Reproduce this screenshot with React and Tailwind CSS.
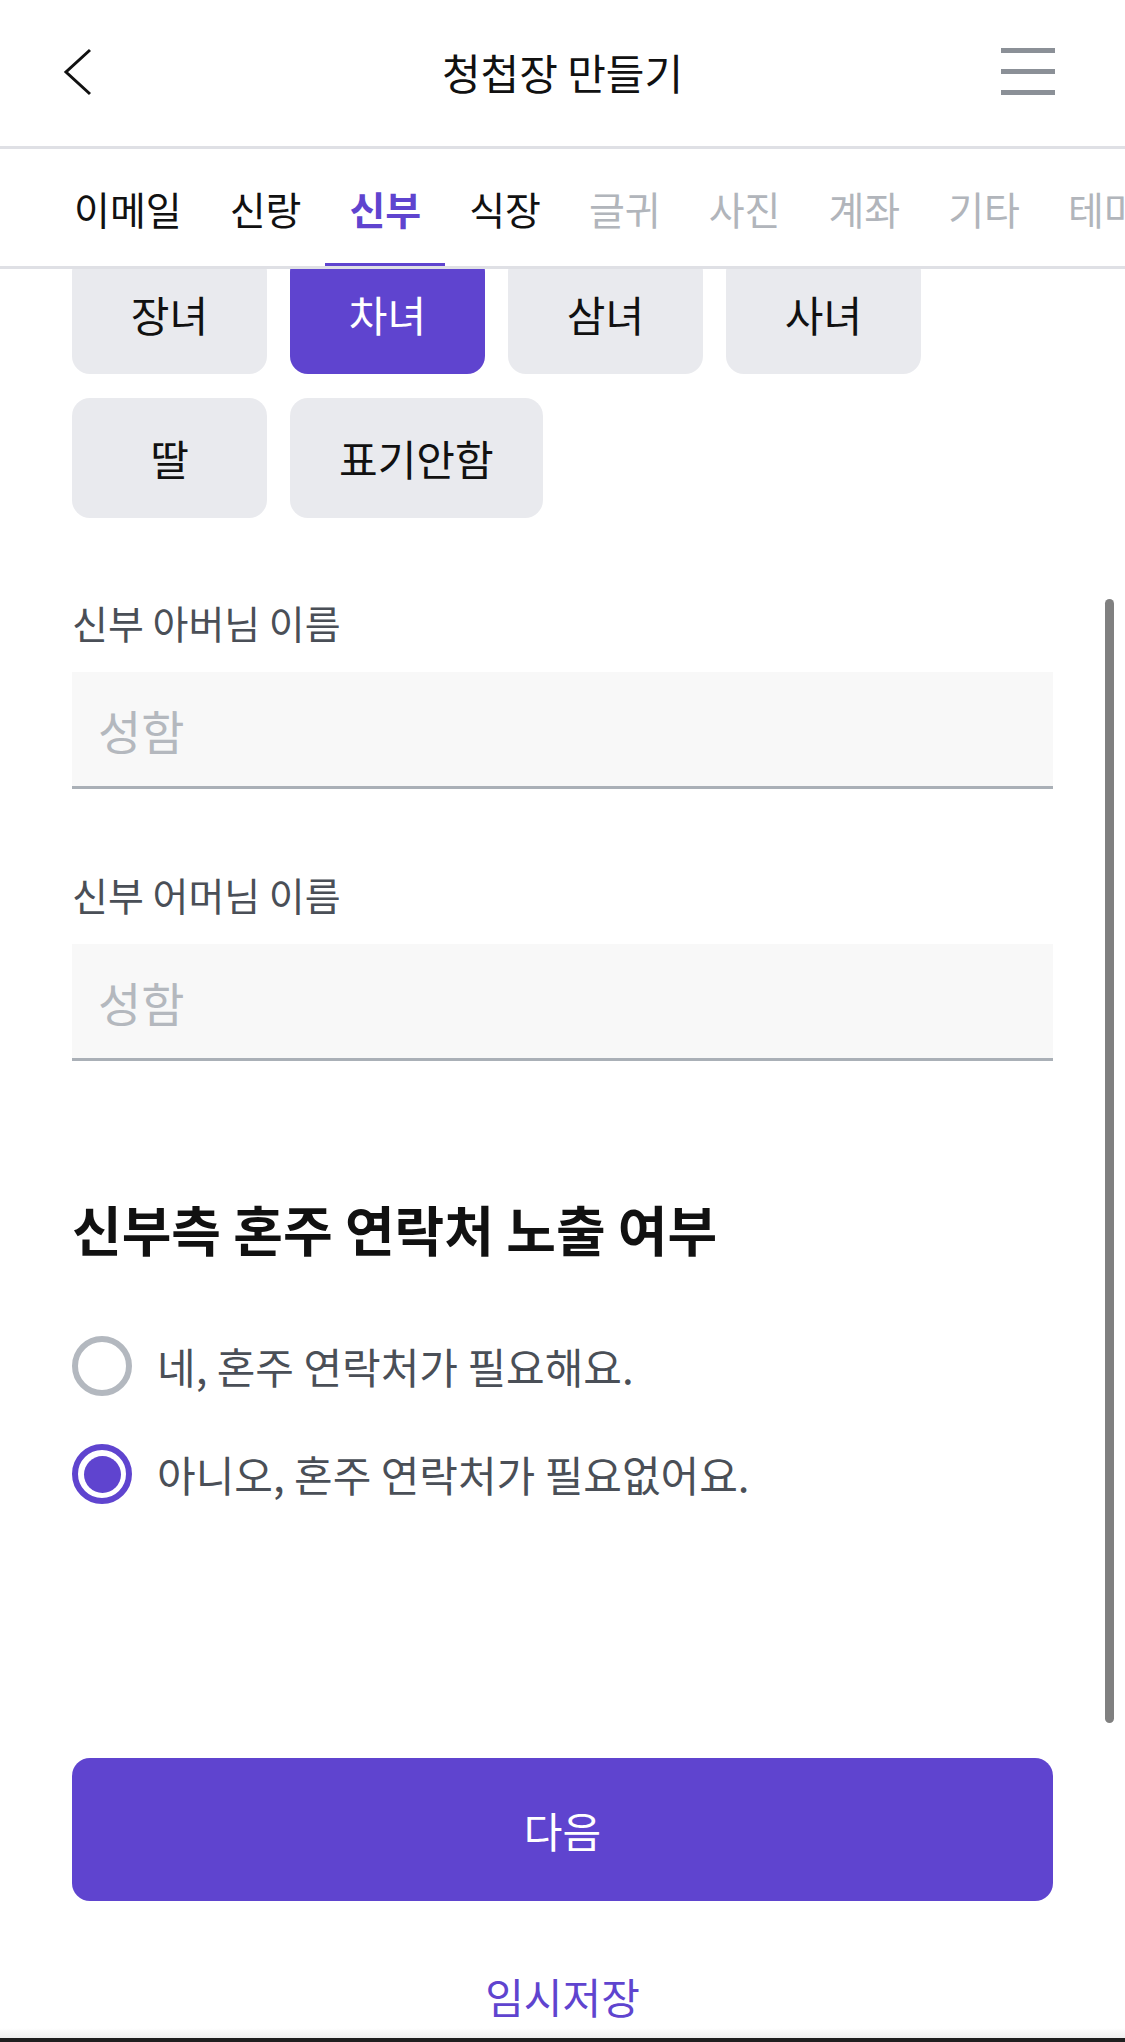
import React, { useState } from 'react'

const tabs = [
  { label: '이메일', state: 'done' },
  { label: '신랑', state: 'done' },
  { label: '신부', state: 'active' },
  { label: '식장', state: 'done' },
  { label: '글귀', state: 'off' },
  { label: '사진', state: 'off' },
  { label: '계좌', state: 'off' },
  { label: '기타', state: 'off' },
  { label: '테마', state: 'off' },
]

const orders = ['장녀', '차녀', '삼녀', '사녀', '딸', '표기안함']

function Radio({ checked, label, onClick }) {
  return (
    <button onClick={onClick} className="flex items-center gap-[25px] h-[60px] text-left">
      {checked ? (
        <span className="w-[60px] h-[60px] rounded-full border-[6px] border-[#5f44cf] flex items-center justify-center">
          <span className="w-[37px] h-[37px] rounded-full bg-[#5f44cf]"></span>
        </span>
      ) : (
        <span className="w-[60px] h-[60px] rounded-full border-[6px] border-[#b3b8bf]"></span>
      )}
      <span className="text-[42px] leading-[56px] text-[#4a4f57]">{label}</span>
    </button>
  )
}

function Field({ label }) {
  return (
    <div>
      <div className="text-[39px] leading-[48px] text-[#4a4f57]">{label}</div>
      <input
        placeholder="성함"
        className="mt-[26px] w-full h-[117px] bg-[#f8f8f8] border-b-[3px] border-[#aab0b7] px-[26px] text-[47px] text-[#111] placeholder:text-[#b4b8be] outline-none"
      />
    </div>
  )
}

export default function App() {
  const [order, setOrder] = useState('차녀')
  const [contact, setContact] = useState(false)

  return (
    <div
      className="w-[1125px] h-[2042px] bg-white flex flex-col overflow-hidden"
      style={{ fontFamily: '"Noto Sans CJK KR", "Noto Sans", sans-serif' }}
    >
      {/* header */}
      <header className="h-[149px] shrink-0 border-b-[3px] border-[#dfe0e5] flex items-center justify-between px-[60px] pr-[70px] relative">
        <svg width="34" height="48" viewBox="0 0 34 48" className="-mt-[3px]">
          <polyline points="30,2 6,24 30,46" fill="none" stroke="#111" strokeWidth="3" />
        </svg>
        <h1 className="absolute left-0 right-0 text-center text-[42px] leading-[56px] text-[#111] -mt-[3px] pointer-events-none">
          청첩장 만들기
        </h1>
        <div className="flex flex-col gap-[16px] w-[54px] -mt-[3px]">
          <span className="h-[5px] bg-[#8b9097]"></span>
          <span className="h-[5px] bg-[#8b9097]"></span>
          <span className="h-[5px] bg-[#8b9097]"></span>
        </div>
      </header>

      <nav className="h-[120px] shrink-0 border-b-[3px] border-[#dfe0e5] flex pl-[50px] overflow-hidden relative z-10 bg-white">
        {tabs.map((t) => (
          <div
            key={t.label}
            className={
              'relative shrink-0 px-[24px] flex items-center text-[39px] leading-[52px] whitespace-nowrap ' +
              (t.state === 'active'
                ? 'font-bold text-[#5f44cf]'
                : t.state === 'done'
                ? 'text-[#111]'
                : 'text-[#b1b5bb]')
            }
          >
            {t.label}
            {t.state === 'active' && (
              <span className="absolute left-0 right-0 bottom-0 h-[3px] bg-[#5f44cf]"></span>
            )}
          </div>
        ))}
      </nav>

      {/* scrolled content */}
      <main className="flex-1 relative overflow-hidden">
        <div className="-mt-[15px] px-[72px]">
          <div className="flex flex-wrap gap-x-[23px] gap-y-[24px] w-[900px]">
            {orders.map((o) => (
              <button
                key={o}
                onClick={() => setOrder(o)}
                className={
                  'h-[120px] min-w-[195px] px-[49px] rounded-[18px] text-[42px] leading-[52px] ' +
                  (order === o ? 'bg-[#5f44cf] text-white' : 'bg-[#e9eaee] text-[#111]')
                }
              >
                {o}
              </button>
            ))}
          </div>

          <div className="mt-[80px]">
            <Field label="신부 아버님 이름" />
          </div>
          <div className="mt-[81px]">
            <Field label="신부 어머님 이름" />
          </div>

          <h2 className="mt-[136px] text-[54px] leading-[64px] font-bold text-[#111]">
            신부측 혼주 연락처 노출 여부
          </h2>

          <div className="mt-[75px] flex flex-col gap-[48px]">
            <Radio checked={contact} label="네, 혼주 연락처가 필요해요." onClick={() => setContact(true)} />
            <Radio checked={!contact} label="아니오, 혼주 연락처가 필요없어요." onClick={() => setContact(false)} />
          </div>
        </div>

        {/* overlay scrollbar */}
        <div className="absolute right-[11px] top-[330px] w-[9px] h-[1124px] rounded-full bg-[#808080]"></div>
      </main>

      {/* footer */}
      <footer className="h-[284px] shrink-0 flex flex-col items-center px-[72px]">
        <button className="w-full h-[143px] rounded-[18px] bg-[#5f44cf] text-white text-[42px] leading-[56px]">
          다음
        </button>
        <button className="mt-[67px] text-[42px] leading-[56px] text-[#5f44cf]">임시저장</button>
        <div className="mt-auto w-[1125px] h-[14px] bg-gradient-to-b from-white to-[#e8e8e8] flex flex-col justify-end">
          <div className="h-[4px] bg-[#1f1f1f]"></div>
        </div>
      </footer>
    </div>
  )
}
